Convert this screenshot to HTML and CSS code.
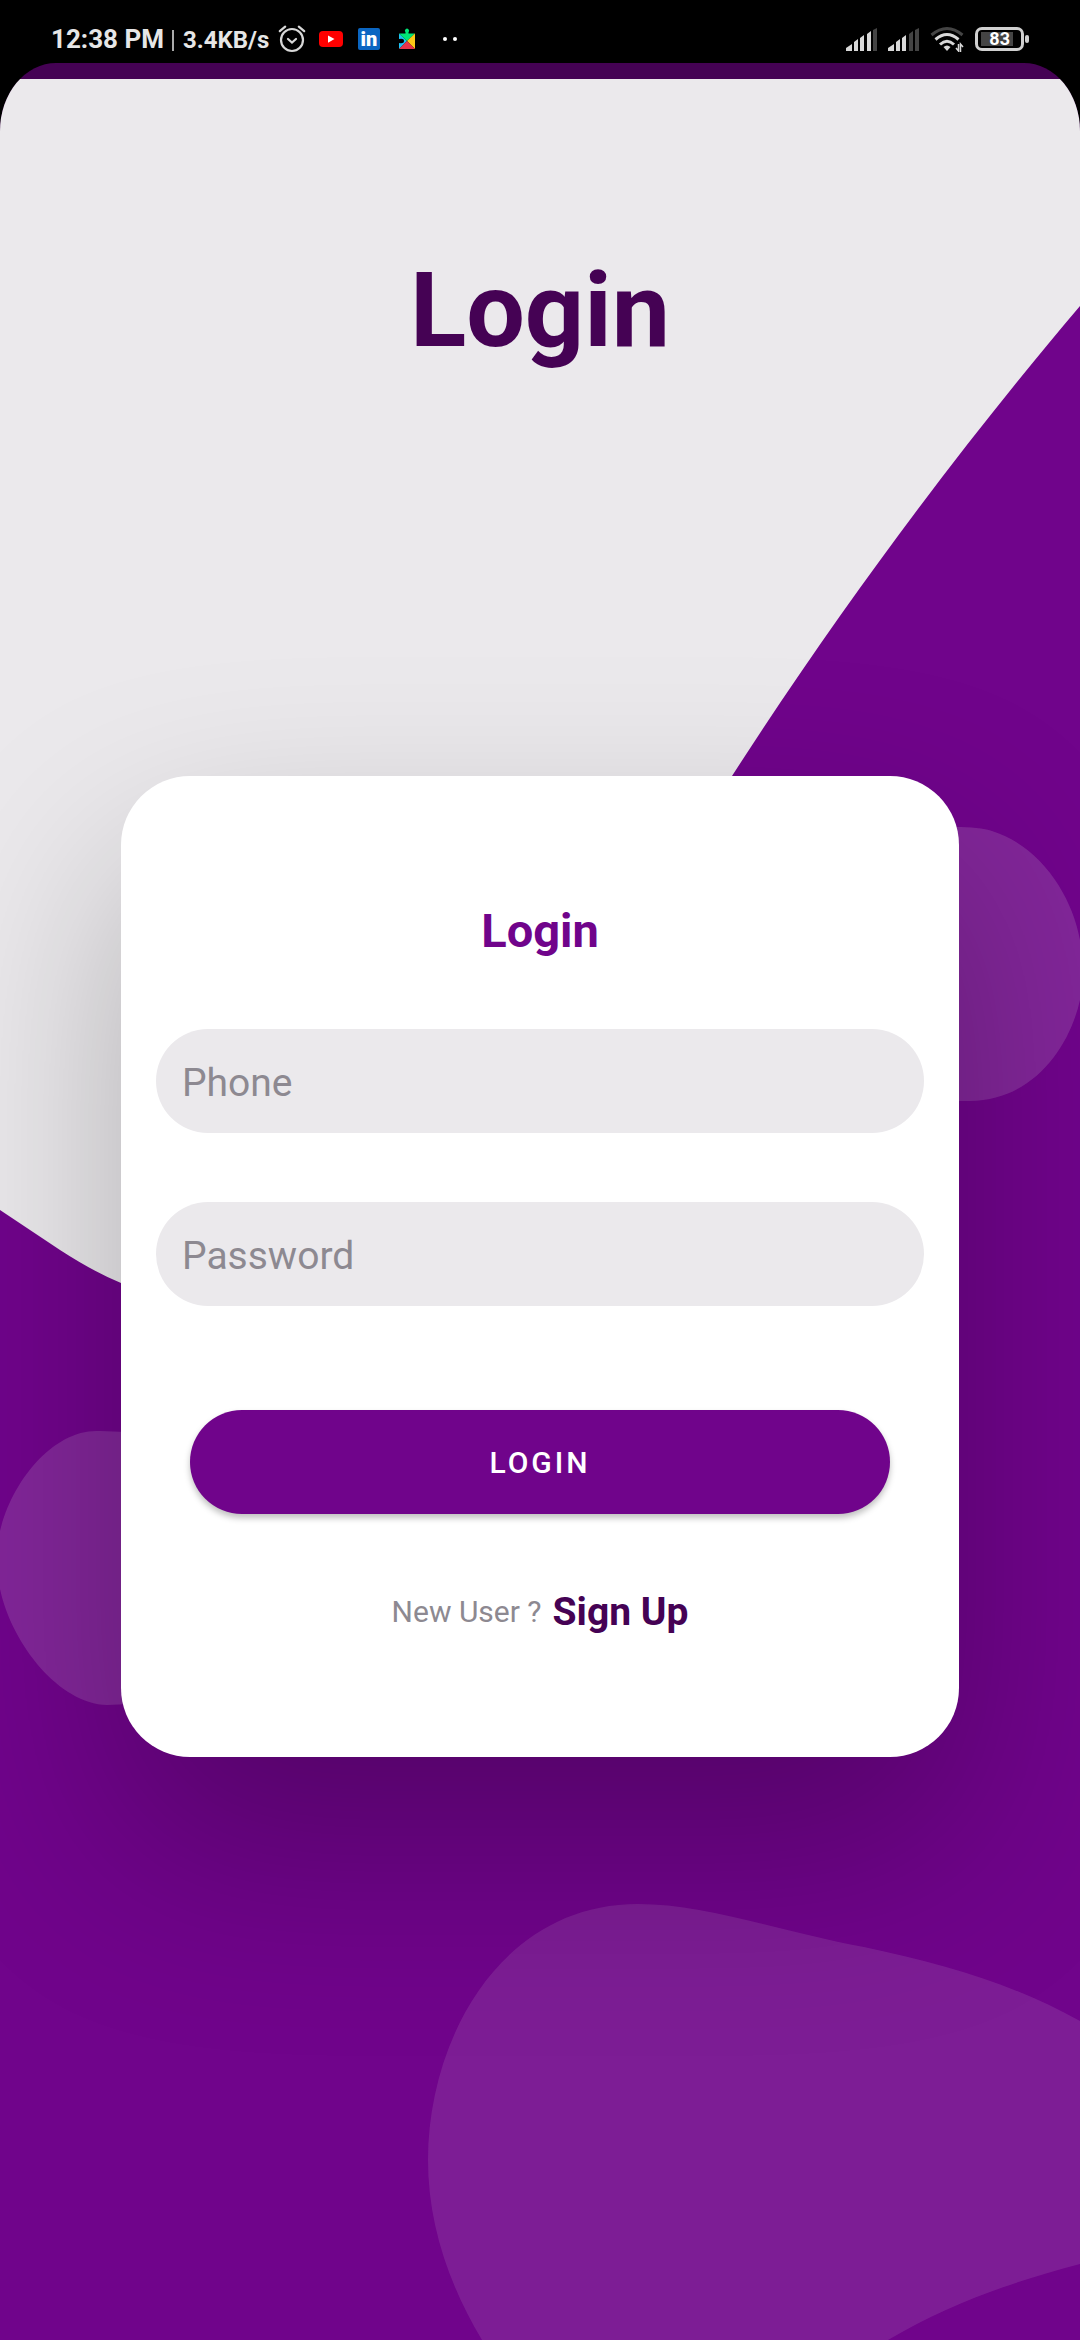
FILE: index.html
```html
<!DOCTYPE html>
<html lang="en">
<head>
<meta charset="utf-8">
<meta name="viewport" content="width=device-width, initial-scale=1">
<title>Login</title>
<link rel="stylesheet" href="styles.css">
</head>
<body>
<header class="status">
  <div class="status-left">
    <span class="clock">12:38 PM</span>
    <span class="divider"></span>
    <span class="speed">3.4KB/s</span>
    <svg class="alarm" width="28" height="28" viewBox="0 0 28 28" fill="none" stroke="#d8d8d8" stroke-width="2.2" stroke-linecap="round">
      <circle cx="14" cy="15" r="11"/>
      <path d="M1.800 6.200 7.200 1.600M26.200 6.200 20.800 1.600"/>
      <path d="m10 14 4 3.500 4-3.500"/>
    </svg>
    <svg class="youtube" width="24" height="16" viewBox="0 0 24 16">
      <rect width="24" height="16" rx="4" fill="#f00"/>
      <path d="M9 4.500 15.500 8 9 11.800z" fill="#fff"/>
    </svg>
    <svg class="linkedin" width="22" height="22" viewBox="0 0 22 22">
      <rect width="22" height="22" rx="2" fill="#0b66c2"/>
      <text class="linkedin-text" x="11" y="18" text-anchor="middle">in</text>
    </svg>
    <svg class="play" width="16" height="22" viewBox="0 0 16 22">
      <path d="M0 5.500 8 13 0 21v-6q5 1 5-2t-5-2z" fill="#1cc3f5"/>
      <path d="M0 5.500h6.500V4a2 2 0 1 1 3 0v1.500H16L8 13z" fill="#00e676"/>
      <path d="M16 5.500V21L8 13z" fill="#fdc816"/>
      <path d="M16 21H0l8-8z" fill="#e8334a"/>
    </svg>
    <svg class="dots" width="14" height="4" viewBox="0 0 14 4" fill="#fff">
      <circle cx="2" cy="2" r="2"/><circle cx="12" cy="2" r="2"/>
    </svg>
  </div>
  <div class="status-right">
    <svg width="31" height="24" viewBox="0 0 31 24" fill="#d8d8d8">
      <path d="M0 24v-3l6-4v7zM8 24v-9l4-3v12zM14 24V11l4-3v16zM21 24V7l4-3v20z"/>
      <path d="M27 24V3l4-2v23z" fill="#444"/>
    </svg>
    <svg width="31" height="24" viewBox="0 0 31 24" fill="#d8d8d8">
      <path d="M0 24v-3l6-4v7zM8 24v-9l4-3v12zM14 24V11l4-3v16z"/>
      <path d="M21 24V7l4-3v20zM27 24V3l4-2v23z" fill="#444"/>
    </svg>
    <svg class="wifi" width="34" height="26" viewBox="0 0 34 26" fill="none" stroke="#d8d8d8" stroke-width="3">
      <path d="M1.500 9Q17-4 32.500 9" stroke="#444"/>
      <path d="M5.500 13.500Q17 3.500 28.500 13.500"/>
      <path d="M10 18.500q7-6.500 14 0"/>
      <path d="M13.500 21q3.500-3 7 0L17 25z" fill="#d8d8d8" stroke="none"/>
      <path d="m26 22 2.500 3v-7M33 21l-2.500-3v8" stroke-width="1.500"/>
    </svg>
    <div class="battery"><span class="battery-level">83</span></div>
    <span class="battery-tip"></span>
  </div>
</header>

<div class="device">
  <main class="screen">
    <svg class="backdrop" viewBox="0 79 1080 2261" preserveAspectRatio="none" aria-hidden="true">
      <path fill="#70048b" d="M1080 306C968 438 848 596 732 776L500 1200 121 1283Q94 1272 60 1250L0 1210V2340H1080Z"/>
      <path class="blob" d="M900 832C930 826 975 825 992 831 1040 846 1072 895 1080 940V1000C1070 1045 1035 1100 970 1101H900Z"/>
      <path class="blob" d="M180 1434 100 1431C55 1428 12 1480 0 1531V1589C12 1645 60 1704 107 1705L180 1702Z"/>
      <path class="blob blob-large" d="M482 2340C448 2283 428 2223 428 2160 428 2040 500 1904 638 1904 706 1904 779 1931 864 1947 948 1965 1013 1984 1080 2021V2264C1004 2284 946 2306 888 2340Z"/>
    </svg>
    <h1 class="page-title">Login</h1>
    <form class="card">
      <h2 class="card-title">Login</h2>
      <div class="fields">
        <input class="field" type="tel" placeholder="Phone" aria-label="Phone">
        <input class="field" type="password" placeholder="Password" aria-label="Password">
      </div>
      <button class="submit" type="submit">LOGIN</button>
      <p class="signup"><span class="signup-hint">New User ?</span><a class="signup-link" href="#signup">Sign Up</a></p>
    </form>
  </main>
</div>
</body>
</html>
```

FILE: styles.css
```css
* {
  box-sizing: border-box;
}

body {
  margin: 0;
  min-height: 100vh;
  display: flex;
  flex-direction: column;
  background: #000;
  font-family: Roboto, sans-serif;
}

/* System status bar */
.status {
  height: 63px;
  padding: 14px 51px 0;
  display: flex;
  justify-content: space-between;
  color: #e6e6e6;
}

.status-left,
.status-right {
  height: 49px;
  display: flex;
  align-items: center;
}

.clock {
  font-size: 26px;
  font-weight: 700;
}

.divider {
  width: 2px;
  height: 21px;
  margin: 4px 9px 0 8px;
  background: #aaa;
}

.speed {
  padding-top: 2px;
  font-size: 24px;
  font-weight: 700;
}

.alarm {
  margin-left: 9px;
}

.youtube {
  margin-left: 13px;
}

.linkedin {
  margin-left: 15px;
}

.linkedin-text {
  fill: #fff;
  font-size: 20px;
  font-weight: 900;
}

.play {
  margin-left: 19px;
}

.dots {
  margin-left: 28px;
}

.status-right {
  gap: 11px;
}

.battery {
  width: 49px;
  height: 24px;
  padding: 2px 3px;
  display: flex;
  border: 3px solid #d0d0d0;
  border-radius: 7px;
}

.battery-level {
  width: 32px;
  background: #444;
  color: #fff;
  font-size: 18px;
  font-weight: 700;
  line-height: 14px;
  text-align: right;
  padding-right: 3px;
}

.battery-tip {
  width: 4px;
  height: 8px;
  margin-left: -10px;
  border-radius: 2px;
  background: #d0d0d0;
}

/* App window with rounded display corners */
.device {
  flex: 1;
  padding-top: 16px;
  display: flex;
  flex-direction: column;
  overflow: hidden;
  border-radius: 56px 56px 0 0 / 68px 68px 0 0;
  background: #450254;
}

.screen {
  position: relative;
  flex: 1;
  padding: 171px 121px 120px;
  background: #ebe9ec;
}

.backdrop {
  position: absolute;
  inset: 0;
  width: 100%;
  height: 100%;
}

.blob {
  fill: #ebe9ec;
  fill-opacity: 0.15;
}

.blob-large {
  fill-opacity: 0.11;
}

.page-title {
  position: relative;
  margin: 0 0 404px;
  color: #450254;
  font-size: 104px;
  line-height: 122px;
  font-weight: 700;
  text-align: center;
}

/* Login card */
.card {
  position: relative;
  padding: 127px 35px 122px;
  border-radius: 69px;
  background: #fff;
  box-shadow: 0 90px 200px rgba(0, 0, 0, 0.25);
}

.card-title {
  margin: 0 0 70px;
  color: #70048b;
  font-size: 47px;
  line-height: 56px;
  font-weight: 700;
  text-align: center;
}

.fields {
  display: grid;
  gap: 69px;
}

.field {
  width: 100%;
  height: 104px;
  padding: 4px 26px 0;
  border: 0;
  border-radius: 52px;
  background: #ebe9ec;
  color: #450254;
  font: 400 39px Roboto, sans-serif;
}

.field::placeholder {
  color: #8d8991;
}

.submit {
  display: block;
  width: calc(100% - 68px);
  height: 104px;
  margin: 104px 34px 75px;
  border: 0;
  border-radius: 52px;
  background: #70048b;
  box-shadow: 0 4px 6px rgba(0, 0, 0, 0.25);
  color: #fff;
  font: 500 30px Roboto, sans-serif;
  letter-spacing: 3px;
}

.signup {
  margin: 0;
  display: flex;
  justify-content: center;
  align-items: center;
  gap: 11px;
  line-height: 46px;
}

.signup-hint {
  color: #8d8991;
  font-size: 30px;
}

.signup-link {
  color: #450254;
  font-size: 39px;
  font-weight: 700;
  text-decoration: none;
}
```
